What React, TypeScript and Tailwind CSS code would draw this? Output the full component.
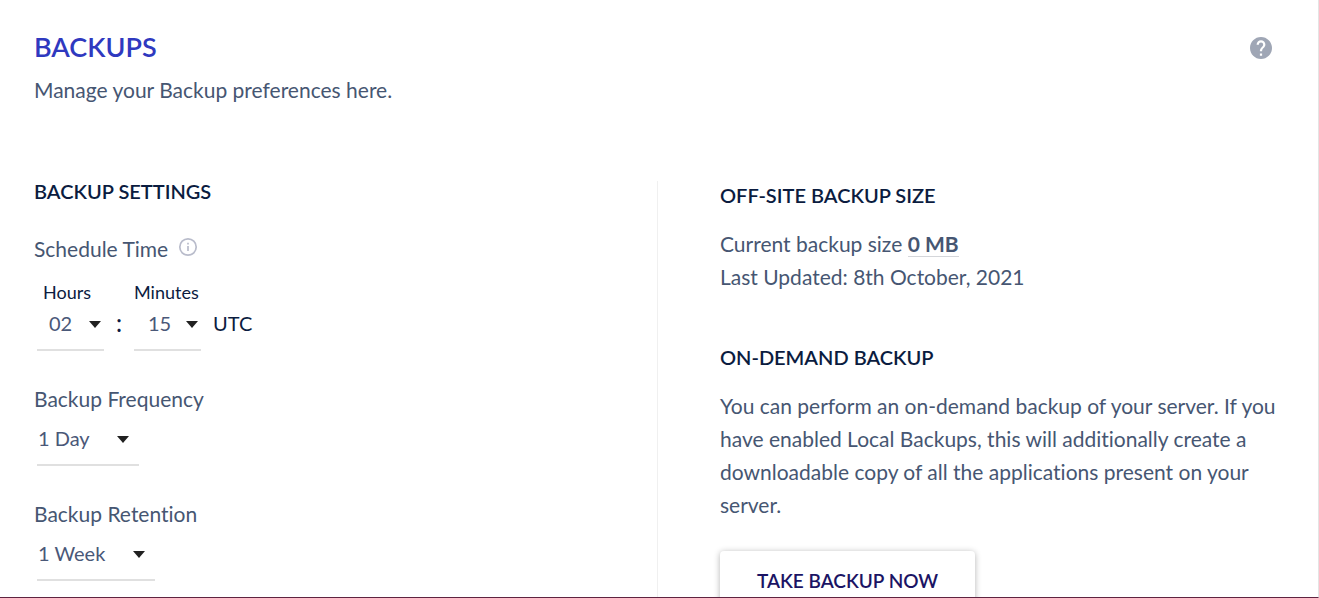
import type { ReactNode } from "react";

type PickerProps = {
  id: string;
  options: string[];
  width: string;
  padding: string;
  arrow: string;
};

function Picker({ id, options, width, padding, arrow }: PickerProps) {
  return (
    <div className={`relative ${width}`}>
      <select
        id={id}
        className={`block h-[41px] w-full cursor-pointer appearance-none border-b-2 border-[#e0e0e0] bg-transparent pb-[13px] text-xl leading-6 text-[#4a5878] outline-none ${padding}`}
      >
        {options.map((option) => (
          <option key={option}>{option}</option>
        ))}
      </select>
      <svg
        viewBox="0 0 12 7"
        className={`pointer-events-none absolute top-[11px] h-[7px] w-3 fill-[#212121] ${arrow}`}
        aria-hidden="true"
      >
        <path d="M0 0h12L6 7z" />
      </svg>
    </div>
  );
}

function Heading({ children }: { children: ReactNode }) {
  return <h2 className="text-xl leading-7 font-semibold text-[#0b1c3f]">{children}</h2>;
}

export default function App() {
  return (
    <main className="flex h-screen flex-col overflow-hidden border-r border-b border-r-[#e4e4e4] border-b-[#5f2440] bg-white font-['Lato','Open_Sans',sans-serif] text-[#465672] [font-variant-ligatures:none]">
      <header className="flex shrink-0 items-start justify-between pt-7 pr-[45px] pl-[34px]">
        <div>
          <h1 className="text-[27px] leading-[38px] font-semibold text-[#2f39bf]">BACKUPS</h1>
          <p className="mt-1.5 text-[21px] leading-9">Manage your Backup preferences here.</p>
        </div>
        <button type="button" aria-label="Help" className="mt-2 cursor-pointer">
          <svg viewBox="0 0 24 24" className="size-6 fill-[#9fa6b5]" aria-hidden="true">
            <path d="M12 1C5.92 1 1 5.92 1 12s4.92 11 11 11 11-4.92 11-11S18.080 1 12 1zm1.100 18.700h-2.200v-2.200h2.200zm2.280-8.530-.99 1.010c-.79.8-1.290 1.470-1.290 3.120h-2.200v-.55c0-1.210.5-2.310 1.290-3.110l1.360-1.390c.41-.39.65-.94.65-1.550a2.200 2.200 0 0 0-4.400 0H7.600a4.400 4.400 0 0 1 8.800 0c0 .97-.4 1.850-1.020 2.470z" />
          </svg>
        </button>
      </header>

      <div className="mt-[73px] grid shrink-0 grid-cols-2 pr-1">
        <section className="pb-12 pl-[34px]">
          <div className="-mt-1">
            <Heading>BACKUP SETTINGS</Heading>
          </div>
          <div className="mt-[26px] flex items-center gap-[10px]">
            <h3 className="text-[21px] leading-9">Schedule Time</h3>
            <button type="button" aria-label="About schedule time" className="mb-1 cursor-pointer">
              <svg viewBox="0 0 20 20" className="size-5" fill="none" stroke="#b9bccb" strokeWidth="1.7" aria-hidden="true">
                <circle cx="10" cy="10" r="8.200" />
                <path d="M10 9v5M10 5.800v1.800" />
              </svg>
            </button>
          </div>
          <div className="mt-[13px] flex pl-[3px] text-[#0b1c3f]">
            <div>
              <label htmlFor="hours" className="block pl-[6px] text-lg leading-6">Hours</label>
              <div className="mt-1.5">
                <Picker id="hours" options={["02", "03", "04"]} width="w-[67px]" padding="pl-3" arrow="right-[3px]" />
              </div>
            </div>
            <span className="mt-[29px] w-[30px] text-center text-2xl leading-7 font-medium">:</span>
            <div>
              <label htmlFor="minutes" className="block text-lg leading-6">Minutes</label>
              <div className="mt-1.5">
                <Picker id="minutes" options={["15", "30", "45"]} width="w-[67px]" padding="pl-[14px]" arrow="right-[3px]" />
              </div>
            </div>
            <span className="mt-[29px] ml-3 text-xl leading-7">UTC</span>
          </div>
          <label htmlFor="frequency" className="mt-[30px] block text-[21px] leading-9">Backup Frequency</label>
          <div className="mt-2 pl-[3px]">
            <Picker id="frequency" options={["1 Day", "3 Days"]} width="w-[102px]" padding="pl-px" arrow="right-[10px]" />
          </div>
          <label htmlFor="retention" className="mt-[30px] block text-[21px] leading-9">Backup Retention</label>
          <div className="mt-2 pl-[3px]">
            <Picker id="retention" options={["1 Week", "2 Weeks"]} width="w-[118px]" padding="pl-px" arrow="right-[10px]" />
          </div>
        </section>

        <section className="border-l border-[#f0f0f0] pr-8 pb-12 pl-[62px]">
          <Heading>OFF-SITE BACKUP SIZE</Heading>
          <div className="mt-[18px] text-[21px] leading-[33px]">
            <p>
              Current backup size <strong className="border-b border-[#d4d6da] font-bold">0 MB</strong>
            </p>
            <p>Last Updated: 8th October, 2021</p>
          </div>
          <div className="mt-[50px]">
            <Heading>ON-DEMAND BACKUP</Heading>
          </div>
          <p className="mt-[18px] text-[21px] leading-[33px]">
            You can perform an on-demand backup of your server. If you have enabled Local Backups, this will additionally create a downloadable copy of all the applications present on your server.
          </p>
          <button
            type="button"
            className="mt-[30px] h-[60px] cursor-pointer rounded px-[37px] text-[19px] font-semibold text-[#1b1464] shadow-[0_1px_6px_rgba(0,0,0,0.3)]"
          >
            TAKE BACKUP NOW
          </button>
        </section>
      </div>
    </main>
  );
}
